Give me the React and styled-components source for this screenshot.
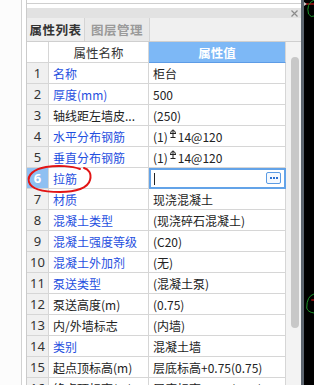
import React from "react";
import styled, { createGlobalStyle } from "styled-components";

const Global = createGlobalStyle`
  html, body { margin: 0; padding: 0; background: #fff; }
  body { font-family: "Noto Sans CJK SC", "Microsoft YaHei", sans-serif; }
`;

const Root = styled.div`
  width: 314px;
  height: 385px;
  display: flex;
  overflow: hidden;
  position: relative;
  background: #fff;
`;

const Gutter = styled.div`
  width: 21px;
  background: #fcfcfc;
  border-right: 1px solid #d2d2d2;
`;

const GutterGap = styled.div`
  width: 4px;
  background: #fff;
`;

const Panel = styled.div`
  width: 274px;
  display: flex;
  flex-direction: column;
  border-left: 1px solid #cbcbcb;
  background: #fff;
`;

const TopBox = styled.div`
  height: 3px;
  border-bottom: 1px solid #cfcfcf;
  margin-bottom: 4px;
`;

const TitleBar = styled.div`
  height: 10px;
  background: #e2e2e2;
  display: flex;
  justify-content: flex-end;
  align-items: center;
  padding-right: 3px;
`;

const CloseX = styled.svg`
  width: 7px;
  height: 7px;
`;

const TabBar = styled.div`
  height: 24px;
  background: #f0f0f0;
  display: flex;
  border-bottom: 1px solid #cfcfcf;
  box-sizing: border-box;
`;

const Tab = styled.div`
  width: ${(p) => (p.$active ? "57px" : "64px")};
  display: flex;
  align-items: center;
  justify-content: center;
  font-size: 12.5px;
  font-weight: 700;
  color: ${(p) => (p.$active ? "#333" : "#9a9a9a")};
  background: ${(p) => (p.$active ? "#eeeeee" : "#e9e9e9")};
  border-right: 1px solid #d4d4d4;
  letter-spacing: 0.5px;
`;

const Body = styled.div`
  flex: 1;
  display: flex;
  min-height: 0;
`;

const Table = styled.div`
  width: 259px;
  display: grid;
  grid-template-columns: 22px 100px 137px;
  grid-auto-rows: 21px;
  align-content: start;
`;

const Cell = styled.div`
  box-sizing: border-box;
  border-right: 1px solid #d6d6d6;
  border-bottom: 1px solid #d6d6d6;
  display: flex;
  align-items: center;
  font-size: 12px;
  white-space: nowrap;
  overflow: hidden;
  position: relative;
`;

const NumCell = styled(Cell)`
  justify-content: center;
  background: ${(p) => (p.$sel ? "#8fc0f2" : "#f0f0f0")};
  color: ${(p) => (p.$sel ? "#fff" : "#333")};
  font-weight: ${(p) => (p.$sel ? 700 : 400)};
  font-size: 13px;
  font-family: "Noto Sans", "Noto Sans CJK SC", sans-serif;
`;

const HeadCell = styled(Cell)`
  justify-content: center;
  font-size: 12.5px;
  background: ${(p) => (p.$blue ? "#7db8f6" : "#fff")};
  color: ${(p) => (p.$blue ? "#fff" : "#333")};
  font-weight: ${(p) => (p.$blue ? 700 : 400)};
  border-bottom-color: ${(p) => (p.$blue ? "#5d9ce6" : "#d6d6d6")};
`;

const NameCell = styled(Cell)`
  padding-left: 4px;
  color: ${(p) => (p.$blue ? "#1f4fe0" : "#222")};
`;

const ValueCell = styled(Cell)`
  padding-left: 4px;
  color: #222;
  ${(p) =>
    p.$edit &&
    `
    border: 2px solid #63a3e8;
    padding-left: 3px;
  `}
`;

const Caret = styled.span`
  width: 1px;
  height: 12px;
  background: #222;
`;

const MoreBtn = styled.div`
  position: absolute;
  right: 3px;
  top: 2px;
  width: 15px;
  height: 12px;
  box-sizing: border-box;
  border: 1px solid #5a9be4;
  border-radius: 2px;
  background: #f4f9ff;
  display: flex;
  align-items: center;
  justify-content: center;
  gap: 1px;
`;

const Dot = styled.span`
  width: 2px;
  height: 2px;
  background: #2a6fd0;
`;

const Scroll = styled.div`
  width: 15px;
  background: #f3f3f3;
  display: flex;
  justify-content: center;
  padding-top: 15px;
  box-sizing: border-box;
`;

const Thumb = styled.div`
  width: 8px;
  height: 271px;
  margin-left: 2px;
  border-radius: 4px;
  background: #c8c8c8;
`;

const Strip = styled.div`
  width: 3px;
  background: #5d6670;
`;

const Canvas = styled.div`
  flex: 1;
  background: #000;
  position: relative;
`;

const CanvasArt = styled.svg`
  position: absolute;
  inset: 0;
  width: 100%;
  height: 100%;
`;

const Annot = styled.svg`
  position: absolute;
  left: 26px;
  top: 163px;
  width: 68px;
  height: 32px;
  pointer-events: none;
`;

const Rebar = () => (
  <svg width="8" height="10" viewBox="0 0 8 10" style={{ margin: "0 1px 4px 1px" }}>
    <path d="M1 4.5 H7 M4 0.5 V8.5 M1.5 8.5 H6.5" stroke="#222" strokeWidth="1" fill="none" />
    <path d="M1.5 4.5 Q1.5 1.5 4 1.5 Q6.5 1.5 6.5 4.5" stroke="#222" strokeWidth="1" fill="none" />
  </svg>
);

const rows = [
  ["名称", true, "柜台"],
  ["厚度(mm)", true, "500"],
  ["轴线距左墙皮...", false, "(250)"],
  ["水平分布钢筋", true, "rebar"],
  ["垂直分布钢筋", true, "rebar"],
  ["拉筋", true, "edit"],
  ["材质", true, "现浇混凝土"],
  ["混凝土类型", true, "(现浇碎石混凝土)"],
  ["混凝土强度等级", true, "(C20)"],
  ["混凝土外加剂", true, "(无)"],
  ["泵送类型", true, "(混凝土泵)"],
  ["泵送高度(m)", false, "(0.75)"],
  ["内/外墙标志", false, "(内墙)"],
  ["类别", true, "混凝土墙"],
  ["起点顶标高(m)", false, "层底标高+0.75(0.75)"],
  ["终点顶标高(m)", false, "层底标高+0.75(0.75)"],
];

export default function App() {
  return (
    <>
      <Global />
      <Root>
        <Gutter />
        <GutterGap />
        <Panel>
          <TopBox />
          <TitleBar>
            <CloseX viewBox="0 0 7 7">
              <path d="M0.5 0.5 L6.5 6.5 M6.5 0.5 L0.5 6.5" stroke="#8a8a8a" strokeWidth="1.2" />
            </CloseX>
          </TitleBar>
          <TabBar>
            <Tab $active>属性列表</Tab>
            <Tab>图层管理</Tab>
          </TabBar>
          <Body>
            <Table>
              <HeadCell />
              <HeadCell>属性名称</HeadCell>
              <HeadCell $blue>属性值</HeadCell>
              {rows.map(([name, blue, val], i) => {
                const edit = val === "edit";
                return (
                  <React.Fragment key={i}>
                    <NumCell $sel={edit}>{i + 1}</NumCell>
                    <NameCell $blue={blue}>{name}</NameCell>
                    <ValueCell $edit={edit}>
                      {edit ? (
                        <>
                          <Caret />
                          <MoreBtn>
                            <Dot />
                            <Dot />
                            <Dot />
                          </MoreBtn>
                        </>
                      ) : val === "rebar" ? (
                        <>
                          (1)
                          <Rebar />
                          14@120
                        </>
                      ) : (
                        val
                      )}
                    </ValueCell>
                  </React.Fragment>
                );
              })}
            </Table>
            <Scroll>
              <Thumb />
            </Scroll>
          </Body>
        </Panel>
        <Strip />
        <Canvas>
          <CanvasArt viewBox="0 0 11 385" preserveAspectRatio="none">
            <path d="M0 4 H11" stroke="#d01818" strokeWidth="1.2" />
            <path d="M11 0 Q2 4 5 14 Q8 18 11 16" stroke="#1c9a2a" strokeWidth="1" fill="none" />
            <path d="M0 2 L3 4 L0 6 Z" fill="#c8c8c8" />
            <path d="M11 294 Q3 296 3 308 Q4 312 11 313" stroke="#1c9a2a" strokeWidth="1" fill="none" />
            <path d="M8 300 H11" stroke="#d01818" strokeWidth="1.2" />
          </CanvasArt>
        </Canvas>
        <Annot viewBox="0 0 68 32">
          <path
            d="M58 5 C62 6 66 10 64 17 C62 25 50 29 34 29 C18 29 5 26 3 19 C1 12 8 6 20 4 C32 2 46 3 54 6"
            stroke="#e21515"
            strokeWidth="2"
            fill="none"
            strokeLinecap="round"
          />
        </Annot>
      </Root>
    </>
  );
}
